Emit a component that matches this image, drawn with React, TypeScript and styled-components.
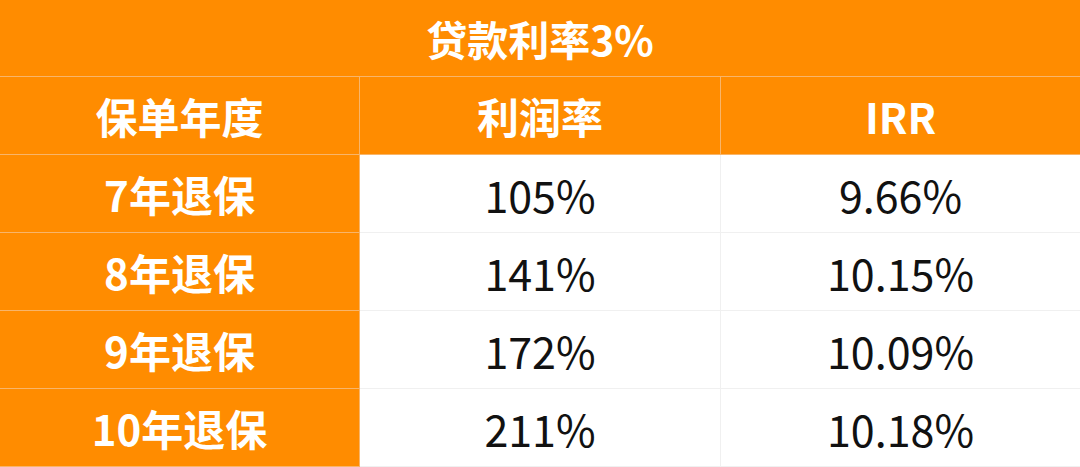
import React from 'react'
import styled, { createGlobalStyle } from 'styled-components'

const GlobalStyle = createGlobalStyle`
  html, body {
    margin: 0;
    padding: 0;
    background: #ffffff;
  }
`

const ORANGE = '#ff8c00'

const Table = styled.div`
  width: 1080px;
  height: 467px;
  display: grid;
  grid-template-columns: 360px 361px 359px;
  grid-template-rows: 77px 78px 78px 78px 78px 78px;
  font-family: 'Noto Sans CJK SC', 'Noto Sans', sans-serif;
  overflow: hidden;
`

const Title = styled.div`
  grid-column: 1 / 4;
  background: ${ORANGE};
  color: #ffffff;
  font-size: 41px;
  font-weight: 700;
  display: flex;
  align-items: center;
  justify-content: center;
  border-bottom: 1px solid #f8b56a;
`

const Cell = styled.div<{ head?: boolean; last?: boolean }>`
  display: flex;
  align-items: center;
  justify-content: center;
  background: ${({ head }) => (head ? ORANGE : '#ffffff')};
  color: ${({ head }) => (head ? '#ffffff' : '#111111')};
  font-size: ${({ head }) => (head ? '42px' : '43px')};
  font-weight: ${({ head }) => (head ? 700 : 400)};
  border-bottom: 1px solid ${({ head }) => (head ? '#f8b56a' : '#f0f0f0')};
  border-right: ${({ head, last }) => (last ? 'none' : head ? '1px solid #f8b56a' : '1px solid #f0f0f0')};
  box-sizing: border-box;
`

const header = ['保单年度', '利润率', 'IRR']
const rows = [
  ['7年退保', '105%', '9.66%'],
  ['8年退保', '141%', '10.15%'],
  ['9年退保', '172%', '10.09%'],
  ['10年退保', '211%', '10.18%'],
]

export default function App() {
  return (
    <>
      <GlobalStyle />
      <Table>
        <Title>贷款利率3%</Title>
        {header.map((h, i) => (
          <Cell head key={h} last={i === 2}>
            {h}
          </Cell>
        ))}
        {rows.map((r) => (
          <React.Fragment key={r[0]}>
            <Cell head>{r[0]}</Cell>
            <Cell>{r[1]}</Cell>
            <Cell last>{r[2]}</Cell>
          </React.Fragment>
        ))}
      </Table>
    </>
  )
}
